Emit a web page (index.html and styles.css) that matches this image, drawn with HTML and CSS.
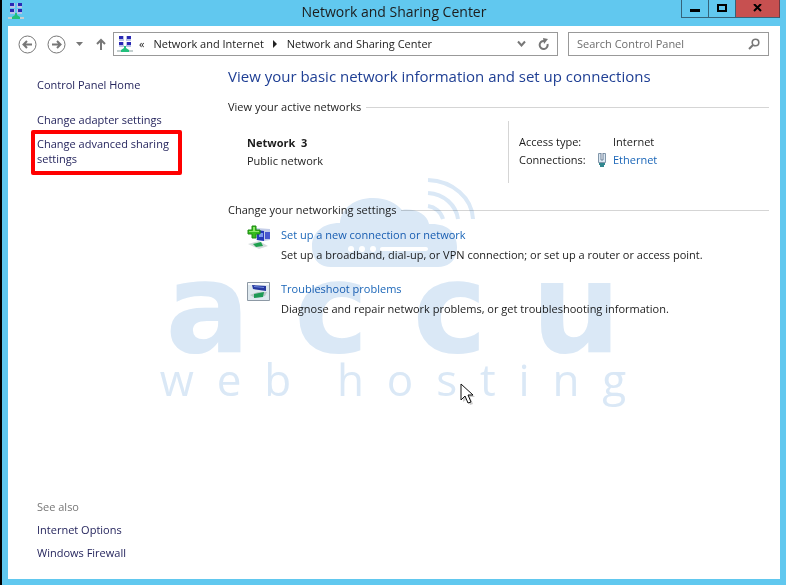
FILE: index.html
```html
<!DOCTYPE html>
<html lang="en">
<head>
  <meta charset="UTF-8">
  <title>Network and Sharing Center</title>
  <link rel="stylesheet" href="styles.css">
</head>
<body>

<!-- network icon, used in the title bar and the address bar -->
<svg width="0" height="0" class="defs" aria-hidden="true">
  <symbol id="net" viewBox="0 0 16 18">
    <rect x="2" y="1" width="5" height="5" fill="#b9c3e6"/>
    <rect x="9" y="1" width="5" height="5" fill="#b9c3e6"/>
    <rect x="2" y="7" width="5" height="5" fill="#b9c3e6"/>
    <rect x="9" y="7" width="5" height="5" fill="#b9c3e6"/>
    <path d="M2 1h4v3H2zM10 1h4v3h-4zM2 7h4v3H2zM10 7h4v3h-4z" fill="#2a28b4"/>
    <path d="M0 15h16v2H0z" fill="#c3cfcf"/>
    <path d="M7 11h2v2l3 2v2H4v-2l3-2z" fill="#22c07c"/>
  </symbol>
</svg>

<div class="window">
  <header class="titlebar">
    <svg class="title-icon" width="16" height="18"><use href="#net"/></svg>
    <h1>Network and Sharing Center</h1>
    <div class="window-buttons">
      <button aria-label="Minimize"><svg width="10" height="10"><path d="M0 5h10v3H0z"/></svg></button>
      <button aria-label="Maximize"><svg width="10" height="10"><path d="M1 1h8v6H1z" fill="none" stroke="#000" stroke-width="2"/></svg></button>
      <button class="close" aria-label="Close"><svg width="10" height="10"><path d="M1 0l7 7M8 0L1 7" stroke="#000" stroke-width="2"/></svg></button>
    </div>
  </header>

  <div class="panel">
    <div class="toolbar">
      <button class="nav-button" aria-label="Back"><svg width="19" height="19" class="line"><circle cx="9.5" cy="9.5" r="8.5"/><path d="M14 9.5H6M9 6L5.500 9.500L9 13" stroke-width="2"/></svg></button>
      <button class="nav-button" aria-label="Forward"><svg width="19" height="19" class="line"><circle cx="9.5" cy="9.5" r="8.5"/><path d="M5 9.5h8M10 6l3.500 3.500L10 13" stroke-width="2"/></svg></button>
      <button class="nav-button" aria-label="Recent locations"><svg width="7" height="5"><path d="M0 0h7L3.500 4z" fill="#777"/></svg></button>
      <button class="nav-button up" aria-label="Up"><svg width="10" height="13" class="line"><path d="M5 12V2M1 6l4-4l4 4" stroke-width="2"/></svg></button>

      <div class="address">
        <svg width="16" height="18"><use href="#net"/></svg>
        <nav class="crumbs">
          <span>«</span>
          <a href="#">Network and Internet</a>
          <svg width="5" height="8"><path d="M0 0l4 4l-4 4z" fill="#222"/></svg>
          <a href="#">Network and Sharing Center</a>
        </nav>
        <button class="nav-button" aria-label="Previous locations"><svg width="9" height="8" class="line"><path d="M1 1.500l3.500 4L8 1.500" stroke-width="2"/></svg></button>
        <button class="nav-button" aria-label="Refresh"><svg width="12" height="12" class="line"><path d="M9.500 6A4 4 0 1 1 6 3" stroke-width="2"/><path d="M5 0l5 1l-4 5z" fill="#777" stroke="none"/></svg></button>
      </div>

      <label class="search">
        <input type="text" placeholder="Search Control Panel" aria-label="Search Control Panel">
        <svg width="12" height="12" class="line"><circle cx="7.5" cy="4.5" r="3.3" stroke-width="1.6"/><path d="M5 7L1 11" stroke-width="2"/></svg>
      </label>
    </div>

    <div class="columns">
      <aside class="sidebar">
        <a class="home" href="#">Control Panel Home</a>
        <a href="#">Change adapter settings</a>
        <a class="highlight" href="#">Change advanced sharing settings</a>
        <div class="see-also">
          <span>See also</span>
          <a href="#">Internet Options</a>
          <a href="#">Windows Firewall</a>
        </div>
      </aside>

      <main class="content">
        <h2>View your basic network information and set up connections</h2>

        <h3>View your active networks</h3>
        <div class="network">
          <div class="network-name">
            <strong>Network&nbsp; 3</strong>
            <span>Public network</span>
          </div>
          <dl>
            <dt>Access type:</dt>
            <dd>Internet</dd>
            <dt>Connections:
              <svg width="10" height="16"><path d="M1.500 1.500h7v9h-7z" fill="#dce8f2" stroke="#8297aa"/><path d="M4 1v7h2V1" fill="#fff" stroke="#6b7f97"/><path d="M2 11h6v2H7v2H3v-2H2z" fill="#31878f"/></svg>
            </dt>
            <dd><a href="#">Ethernet</a></dd>
          </dl>
        </div>

        <h3>Change your networking settings</h3>
        <div class="task">
          <svg width="24" height="24">
            <path d="M9 3l14 1v11l-6 1l-8-1z" fill="#c5cee8"/>
            <path d="M10 5l7 1v10l-7-1z" fill="#2638b8"/>
            <path d="M18 7h5v7h-5z" fill="#4a59cf"/>
            <path d="M12 8h4v4h-4z" fill="#7f9af0"/>
            <path d="M1 19l11-3l9 5l-9 3z" fill="#d5dcdc"/>
            <path d="M6 19l8-2l2 4l-7 1z" fill="#1fa04e"/>
            <path d="M5 1h4v4h4v4H9v4H5V9H1V5h4z" fill="#35bb1d" stroke="#1c8a12"/>
            <path d="M6 2h2v4h4v1H2V6h4z" fill="#8be86a"/>
          </svg>
          <div>
            <a href="#">Set up a new connection or network</a>
            <p>Set up a broadband, dial-up, or VPN connection; or set up a router or access point.</p>
          </div>
        </div>
        <div class="task">
          <svg width="24" height="24">
            <path d="M.5 3.500h22v18H.5z" fill="#dfe9ef" stroke="#8d99a5"/>
            <path d="M1 4h21v2H1z" fill="#f8fafb"/>
            <path d="M5 6l14 1v5L6 10z" fill="#27399f"/>
            <path d="M7 7l10 1v1L7 8z" fill="#6f8be0"/>
            <path d="M3 16l8-3h9l-2 4l-10 2z" fill="#b9c8c6"/>
            <path d="M7 15l10-2l-1 5l-9 1z" fill="#1d9a55"/>
          </svg>
          <div>
            <a href="#">Troubleshoot problems</a>
            <p>Diagnose and repair network problems, or get troubleshooting information.</p>
          </div>
        </div>
      </main>
    </div>
  </div>
</div>

<div class="watermark">
  <svg width="168" height="92" viewBox="0 0 168 92">
    <path d="M22 90C8 90 3 80 3 69C3 56 13 46 31 46C32 31 46 21 64 21C78 21 87 26 93 33C106 31 118 37 120 47C138 46 148 55 148 70C148 82 141 90 129 90z" fill="#dae8f6"/>
    <g fill="none" stroke="#dae8f6" stroke-width="4">
      <path d="M119 3C144 4 163 21 164 42"/>
      <path d="M119 16C135 17 147 28 149 42"/>
      <path d="M119 29C126 30 132 35 134 42"/>
    </g>
    <g fill="#fff">
      <circle cx="42" cy="72" r="3"/><circle cx="53" cy="72" r="3"/><circle cx="64" cy="72" r="3"/>
      <rect x="71" y="70" width="48" height="4" rx="2"/>
    </g>
  </svg>
  <div class="brand">a c c u</div>
  <div class="tagline">w  e  b    h  o  s  t  i  n  g</div>
</div>

<svg class="cursor" width="16" height="24" aria-hidden="true">
  <path d="M3 3v16l4-3l3 6l3-1l-3-7h5z" fill="#999" opacity=".5"/>
  <path d="M1 1v16l4-4l3 7l3-1l-3-7h5z" fill="#fff" stroke="#111"/>
</svg>

</body>
</html>
```

FILE: styles.css
```css
* {
  box-sizing: border-box;
}

body {
  margin: 0;
  font-family: "Open Sans", "Noto Sans", sans-serif;
  font-size: 11px;
  line-height: 16px;
  color: #1c1c1c;
  position: relative;
}

h1, h2, h3, p, dl, dd {
  margin: 0;
  font-weight: normal;
}

a {
  color: #1b66b8;
  text-decoration: none;
}

a:hover {
  text-decoration: underline;
}

button {
  padding: 0;
  border: none;
  background: none;
  display: flex;
  align-items: center;
  justify-content: center;
}

svg {
  flex: none;
}

.defs {
  position: absolute;
}

.line {
  fill: none;
  stroke: #777;
}

.window {
  min-height: 100vh;
  display: flex;
  flex-direction: column;
  background-color: #61c8ef;
  border-left: 2px solid #000;
  padding: 0 6px 6px;
}

/* title bar */
.titlebar {
  height: 26px;
  display: grid;
  grid-template-columns: 100px 1fr 100px;
}

.title-icon {
  margin-top: 2px;
}

.titlebar h1 {
  font-size: 14px;
  line-height: 24px;
  text-align: center;
}

.window-buttons {
  display: flex;
  justify-content: flex-end;
  align-items: flex-start;
}

.window-buttons button {
  width: 27px;
  height: 18px;
  border: 1px solid #35637a;
  border-top: none;
  border-right: none;
}

.window-buttons .close {
  width: 45px;
  background-color: #c75050;
  border-right: 1px solid #6b3a44;
}

.panel {
  flex: 1;
  display: flex;
  flex-direction: column;
  background-color: #fff;
}

/* toolbar */
.toolbar {
  display: flex;
  align-items: center;
  gap: 10px;
  padding: 6px 11px 4px 10px;
}

.up {
  margin: 0 -3px 0 3px;
}

.address {
  flex: 1;
  height: 24px;
  display: flex;
  align-items: center;
  gap: 12px;
  padding: 0 7px 0 3px;
  border: 1px solid #999;
}

.crumbs {
  flex: 1;
  display: flex;
  align-items: center;
  gap: 9px;
  margin-left: -6px;
}

.crumbs a {
  color: #1c1c1c;
}

.search {
  width: 201px;
  height: 24px;
  display: flex;
  align-items: center;
  padding: 0 8px;
  border: 1px solid #999;
}

.search input {
  flex: 1;
  min-width: 0;
  border: none;
  outline: none;
  padding: 0;
  background: none;
  font: inherit;
}

.search input::placeholder {
  color: #6d6d6d;
}

.columns {
  flex: 1;
  display: grid;
  grid-template-columns: 220px 1fr;
}

/* left side */
.sidebar {
  display: flex;
  flex-direction: column;
  align-items: flex-start;
  padding: 17px 0 18px 29px;
}

.sidebar a {
  color: #26265e;
}

.sidebar .home {
  margin-bottom: 19px;
}

.sidebar .highlight {
  width: 151px;
  margin: 2px 0 0 -6px;
  padding: 2px 0 5px 2px;
  border: 4px solid #f00;
  border-radius: 2px;
  line-height: 15px;
}

.see-also {
  display: flex;
  flex-direction: column;
  gap: 7px;
  margin-top: auto;
  color: #777;
}

/* right side */
.content {
  padding: 5px 11px 0 0;
}

.content h2 {
  font-size: 15px;
  line-height: 22px;
  color: #1f3f94;
  margin-bottom: 12px;
}

.content h3 {
  display: flex;
  align-items: center;
  gap: 5px;
  font-size: 11px;
}

.content h3::after {
  content: "";
  flex: 1;
  border-top: 1px solid #d5d5d5;
}

.network {
  display: grid;
  grid-template-columns: 280px 1fr;
  margin: 6px 0 19px;
  line-height: 18px;
}

.network-name {
  display: flex;
  flex-direction: column;
  padding: 13px 0 13px 19px;
}

.network dl {
  display: grid;
  grid-template-columns: 94px 1fr;
  align-content: start;
  padding: 12px 0 0 10px;
  border-left: 1px solid #d5d5d5;
}

.network dt {
  display: flex;
  align-items: center;
  justify-content: space-between;
  padding-right: 6px;
}

.task {
  display: flex;
  gap: 10px;
  padding-left: 19px;
  margin: 7px 0 14px;
  line-height: 20px;
}

/* logo over the page */
.watermark {
  position: absolute;
  top: 177px;
  left: 0;
  right: 0;
  display: flex;
  flex-direction: column;
  align-items: center;
  color: #dae8f6;
  mix-blend-mode: multiply;
  pointer-events: none;
}

.brand {
  font-family: "DejaVu Sans", sans-serif;
  font-size: 126px;
  font-weight: bold;
  line-height: 80px;
}

.tagline {
  font-size: 44px;
  line-height: 60px;
  white-space: pre;
}

.cursor {
  position: absolute;
  top: 383px;
  left: 460px;
}
```
